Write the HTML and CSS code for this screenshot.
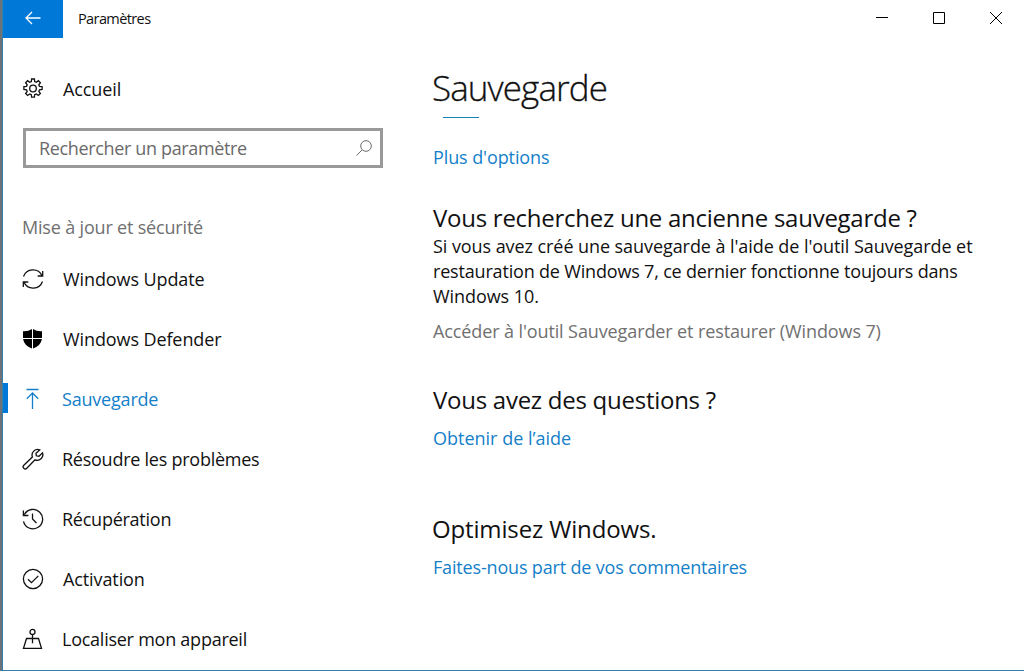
FILE: index.html
```html
<!DOCTYPE html>
<html lang="fr">
<head>
    <meta charset="UTF-8">
    <meta name="viewport" content="width=device-width, initial-scale=1.0">
    <title>Paramètres</title>
    <link rel="stylesheet" href="styles.css">
</head>
<body>
<div class="window">
    <header class="titlebar">
        <button class="back" aria-label="Retour">
            <svg width="16" height="14" viewBox="0 0 16 14"><path d="M15.5 7H1M7 1L1 7l6 6"/></svg>
        </button>
        <span class="app-name">Paramètres</span>
        <div class="controls">
            <svg width="12" height="12" viewBox="0 0 12 12"><path d="M0 5.5h12"/></svg>
            <svg width="12" height="12" viewBox="0 0 12 12"><path d="M.5.5h11v11H.5z"/></svg>
            <svg width="12" height="12" viewBox="0 0 12 12"><path d="M0 0l12 12M12 0L0 12"/></svg>
        </div>
    </header>

    <div class="layout">
        <nav class="sidebar">
            <a class="item home">
                <svg class="icon" viewBox="0 0 22 22"><path d="M9.3 3.6 9.6 1h2.8l.3 2.6 1.6.7 2.1-1.6 2 2-1.6 2.1.7 1.6 2.6.3v2.8l-2.6.3-.7 1.6 1.6 2.1-2 2-2.1-1.6-1.6.7-.3 2.6H9.6l-.3-2.6-1.6-.7-2.1 1.6-2-2 1.6-2.1-.7-1.6-2.6-.3V8.700l2.600-.3.700-1.600L3.600 4.700l2-2 2.100 1.600z"/><circle cx="11" cy="10.500" r="3.300"/></svg>
                <span>Accueil</span>
            </a>
            <div class="search">
                <span>Rechercher un paramètre</span>
                <svg width="16" height="16" viewBox="0 0 16 16"><circle cx="10" cy="6" r="5.300"/><path d="M6.200 9.800L.5 15.500"/></svg>
            </div>
            <h4 class="group">Mise à jour et sécurité</h4>
            <a class="item">
                <svg class="icon" viewBox="0 0 22 22"><path d="M1.500 8.500A10 10 0 0 1 20 7.700M20.700 3v5h-5M20.500 13.500A10 10 0 0 1 2 14.300M1.300 19v-5h5"/></svg>
                <span>Windows Update</span>
            </a>
            <a class="item">
                <svg class="icon solid" viewBox="0 0 22 22"><path d="M10 .9V10H1V3.300Q6 3.800 10 .9zM11 .9Q15 3.800 20 3.300V10h-9zM1.100 11H10v9.600Q2 17.500 1.100 11zM11 11h8.900Q19 17.500 11 20.600z"/></svg>
                <span>Windows Defender</span>
            </a>
            <a class="item active">
                <svg class="icon" viewBox="0 0 22 22"><path d="M4.500 1.500h12M10.500 21V5M4.800 10.700L10.500 5l5.700 5.700"/></svg>
                <span>Sauvegarde</span>
            </a>
            <a class="item tight">
                <svg class="icon" viewBox="0 0 22 22"><path d="M17.700 1.900A5.600 5.600 0 0 0 10.400 9L1.800 17.300a2.100 2.100 0 0 0 3 3L13 11.800a5.600 5.600 0 0 0 7.500-7L17 8.200 14.300 7.800 14 5.200z"/></svg>
                <span>Résoudre les problèmes</span>
            </a>
            <a class="item tight">
                <svg class="icon" viewBox="0 0 22 22"><path d="M1.500 13.300A9.700 9.700 0 1 0 2.400 6.500M1.400 2.500v5h5M10.500 5.500V11l4 4"/></svg>
                <span>Récupération</span>
            </a>
            <a class="item">
                <svg class="icon" viewBox="0 0 22 22"><circle cx="11" cy="11" r="9.600"/><path d="M6 11.300l3.500 3.400 6.800-6.800"/></svg>
                <span>Activation</span>
            </a>
            <a class="item tight">
                <svg class="icon" viewBox="0 0 22 22"><circle cx="10.500" cy="3.900" r="2.500"/><path d="M10.500 6.400v8.800M4.500 10.500h12l3 9.800h-18z"/></svg>
                <span>Localiser mon appareil</span>
            </a>
        </nav>

        <main class="content">
            <h1>Sauvegarde</h1>
            <div class="clipped-line"></div>
            <a class="link more">Plus d'options</a>

            <section class="old-backup">
                <h2>Vous recherchez une ancienne sauvegarde ?</h2>
                <p>Si vous avez créé une sauvegarde à l'aide de l'outil Sauvegarde et<br>
                <span class="line2">restauration de Windows 7, ce dernier fonctionne toujours dans</span><br>
                Windows 10.</p>
                <a class="link muted">Accéder à l'outil Sauvegarder et restaurer (Windows 7)</a>
            </section>

            <section class="questions">
                <h2>Vous avez des questions ?</h2>
                <a class="link">Obtenir de l’aide</a>
            </section>

            <section class="feedback">
                <h2>Optimisez Windows.</h2>
                <a class="link">Faites-nous part de vos commentaires</a>
            </section>
        </main>
    </div>
</div>
</body>
</html>
```
FILE: styles.css
```css
:root {
    --accent: #0078d7;
    --link: #157fc9;
    --text: #111;
    --muted: #707070;
}

* {
    box-sizing: border-box;
}

body {
    margin: 0;
    font-family: "Open Sans", "Noto Sans", sans-serif;
    font-size: 18px;
    color: var(--text);
    background: #fff;
}

svg {
    display: block;
    fill: none;
    stroke: currentColor;
    stroke-width: 1.3;
}

.window {
    height: 671px;
    border-left: 2px solid #6c7278;
    border-bottom: 1px solid #3580a8;
    box-shadow: inset 1px 0 #3580a8;
    padding-left: 1px;
    overflow: hidden;
}

.titlebar {
    display: flex;
    height: 38px;
}

.back {
    width: 60px;
    border: none;
    padding: 0 0 3px;
    display: flex;
    align-items: center;
    justify-content: center;
    background: var(--accent);
    color: #fff;
}

.app-name {
    margin-left: 15px;
    font-size: 14.5px;
    line-height: 37px;
    letter-spacing: -0.6px;
}

.controls {
    display: flex;
    gap: 45px;
    margin: 12px 22px 0 auto;
    color: #000;
}

.controls svg {
    stroke-width: 1;
}

.layout {
    display: flex;
}

.sidebar {
    width: 380px;
    flex: none;
}

.item {
    position: relative;
    display: flex;
    align-items: center;
    height: 60px;
    padding-left: 19px;
    letter-spacing: -0.1px;
}

.item.home {
    margin-top: 21px;
    margin-bottom: 9px;
}

.item.tight {
    letter-spacing: -0.25px;
}

.item.tight .icon,
.item.active .icon {
    margin-right: 18px;
}

.icon {
    width: 22px;
    height: 22px;
    margin-right: 19px;
}

.icon.solid {
    fill: #000;
    stroke: none;
}

.item.active {
    color: var(--link);
    letter-spacing: -0.2px;
}

.item.active::before {
    content: "";
    position: absolute;
    left: 0;
    top: 14px;
    width: 5px;
    height: 30px;
    background: var(--accent);
}

.search {
    width: 360px;
    height: 40px;
    margin-left: 20px;
    padding: 0 8px 0 13px;
    border: 3px solid #999;
    display: flex;
    align-items: center;
    justify-content: space-between;
    letter-spacing: -0.35px;
    color: #6a6a6a;
}

.search svg {
    stroke-width: 1;
}

.group {
    margin: 47px 0 9px 19px;
    font-size: 18px;
    font-weight: 400;
    line-height: 25px;
    letter-spacing: -0.18px;
    color: var(--muted);
}

.content {
    padding: 29px 0 0 50px;
}

h1 {
    margin: 0 0 0 -1px;
    font-size: 35px;
    font-weight: 300;
    line-height: 42px;
    letter-spacing: -0.9px;
    -webkit-text-stroke: 0.3px;
}

h2 {
    margin: 0;
    font-size: 24px;
    font-weight: 400;
    line-height: 32px;
    letter-spacing: -0.26px;
}

.clipped-line {
    width: 36px;
    height: 1px;
    margin: 8px 0 0 10px;
    background: #1583b5;
}

p {
    margin: 0;
    line-height: 25px;
    letter-spacing: -0.07px;
    white-space: nowrap;
}

.line2 {
    letter-spacing: -0.18px;
}

.link {
    display: block;
    line-height: 25px;
    letter-spacing: -0.1px;
    white-space: nowrap;
    color: var(--link);
}

.link.muted {
    margin-top: 10px;
    letter-spacing: -0.11px;
    color: var(--muted);
}

.more {
    margin-top: 27px;
}

.old-backup {
    margin-top: 32px;
}

.questions {
    margin-top: 40px;
}

.questions .link,
.feedback .link {
    margin-top: 10px;
}

.questions .link {
    letter-spacing: 0;
}

.feedback {
    margin-top: 62px;
}

.feedback h2 {
    margin-left: -1px;
    letter-spacing: -0.15px;
}

.feedback .link {
    letter-spacing: -0.17px;
}
```
